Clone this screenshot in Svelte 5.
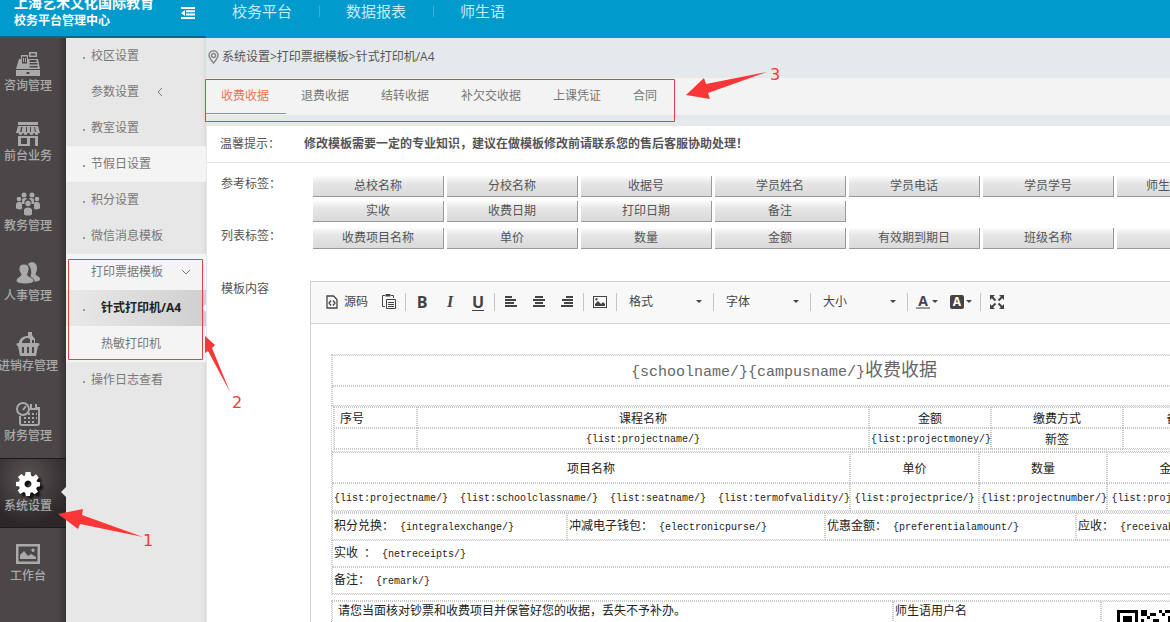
<script>
  const topNav = ['校务平台', '数据报表', '师生语'];

  const modules = [
    { name: '咨询管理', icon: 'register' },
    { name: '前台业务', icon: 'shop' },
    { name: '教务管理', icon: 'group' },
    { name: '人事管理', icon: 'people' },
    { name: '进销存管理', icon: 'basket' },
    { name: '财务管理', icon: 'finance' },
    { name: '系统设置', icon: 'gear' },
    { name: '工作台', icon: 'picture' }
  ];
  let activeModule = '系统设置';

  const menu = [
    { name: '校区设置', dot: true },
    { name: '参数设置', arrow: 'left' },
    { name: '教室设置', dot: true },
    { name: '节假日设置', dot: true, light: true },
    { name: '积分设置', dot: true },
    { name: '微信消息模板', dot: true },
    { name: '打印票据模板', arrow: 'down', light: true },
    { name: '针式打印机/A4', dot: true, sub: true, current: true },
    { name: '热敏打印机', sub: true, light: true },
    { name: '操作日志查看', dot: true }
  ];

  const tabs = ['收费收据', '退费收据', '结转收据', '补欠交收据', '上课凭证', '合同'];
  let activeTab = '收费收据';

  const refTags = [
    '总校名称', '分校名称', '收据号', '学员姓名', '学员电话', '学员学号', '师生语用户名',
    '实收', '收费日期', '打印日期', '备注'
  ];
  const listTags = ['收费项目名称', '单价', '数量', '金额', '有效期到期日', '班级名称', '备注'];

  const combos = ['格式', '字体', '大小'];
</script>

<div class="app">
  <header>
    <div class="brand">
      <div class="brand-text">
        <strong class="school">上海艺术文化国际教育</strong>
        <strong class="center">校务平台管理中心</strong>
      </div>
      <button class="toggle" aria-label="收起菜单">
        <svg width="14" height="12" viewBox="0 0 14 12" fill="#fff">
          <path d="M0 0h14v2H0zM5 3.3h9v2H5zM5 6.6h9v2H5zM0 10h14v2H0zM4 3v6L0 6z" />
        </svg>
      </button>
    </div>
    <nav>
      {#each topNav as item}
        <a href="#top">{item}</a>
      {/each}
    </nav>
  </header>

  <div class="body">
    <nav class="rail">
      {#each modules as item}
        <a href="#module" class:active={item.name === activeModule}>
          <svg width="24" height="24" viewBox="0 0 24 24" fill="currentColor">
            {#if item.icon === 'register'}
              <path fill-rule="evenodd" d="M13 0h8v5h-8zM14.500 1.500v2h5v-2zM5 3h7v4h10l2 10H0L3 7h2zM6 4.500v7h5v-7zM13.500 8v2h7V8zM13.500 11v1.500h8V11zM13.500 14v1.500h8V14zM7 6h1v4H7zM9 6h1v4H9zM0 18h24v6H0zM10.500 20v2h3v-2z" />
            {:else if item.icon === 'shop'}
              <path fill-rule="evenodd" d="M2 0h20v3H2zM2 4h20l2 7h-1.500a2 2 0 0 1-4 0h-1a2 2 0 0 1-4 0h-2a2 2 0 0 1-4 0h-1a2 2 0 0 1-4 0H0zM5 5l-1 5h1.500L6.500 5zM10 5v5h1V5zM14 5v5h1V5zM18 5l1 5h1l-1-5zM2 14h20v10h-3v-8h-5v8H2zM5 16v6h6v-6z" />
            {:else if item.icon === 'group'}
              <circle cx="8" cy="3" r="2.500" /><circle cx="16" cy="3" r="2.500" />
              <circle cx="3" cy="7" r="2.300" /><circle cx="21" cy="7" r="2.300" />
              <circle cx="12" cy="11.500" r="2.700" />
              <path d="M6 12V8c0-2.500 5-2.500 5-1-2 1-3 2-2.500 5zM18 12V8c0-2.500-5-2.500-5-1 2 1 3 2 2.500 5zM0 17v-4c0-4 6-4 6-1v5c-2 1-6 0-6-1zM24 17v-4c0-4-6-4-6-1v5c2 1 6 0 6-1zM8 22v-4c0-3.500 8-3.500 8 0v4c0 2-8 2-8 0z" />
            {:else if item.icon === 'people'}
              <path d="M12 2c3-3 9-2 9 4 0 3-1 4-1.500 6 .5 2 4.500 2 4.500 5 0 2-2 2.500-6 2.500-1-2-2-3-4-4 1.500-3 2.500-8-2-13.500z" />
              <path d="M8 2c4 0 5.500 3 5 6-.3 2-1.300 3-1.500 5 1 2 6.500 2.500 6.500 6 0 4-18 4-18 0 0-3.500 4-4 5-6 0-2-1.800-3-2-5-.4-3 1-6 5-6z" stroke="#4b4748" />
            {:else if item.icon === 'basket'}
              <path fill-rule="evenodd" d="M12 0h4v3l3 4v4h3c2 0 2 3 0 3l-2 10H4L2 14c-2 0-2-3 0-3h1c0-4 4-7 8-7h1zM6 11h8V7L12 6C9 6 6 8 6 11zM16 8v3h2V8zM6 15v6h2v-6zM11 15v6h2v-6zM16 15v6h2v-6z" />
            {:else if item.icon === 'finance'}
              <g fill="none" stroke="currentColor" stroke-width="2">
                <circle cx="7" cy="7" r="6" /><path d="M7 8l3-4M4 14v7q0 2 2 2h15q2 0 2-2V6h-3M15 2v5M20 2v5M14 7h8" />
              </g>
              <path d="M12 11h2v2h-2zM16 11h2v2h-2zM20 11h1v2h-1zM8 15h2v2H8zM12 15h2v2h-2zM16 15h2v2h-2zM8 19h2v2H8zM12 19h2v2h-2zM16 19h2v2h-2zM20 15h1v2h-1z" />
            {:else if item.icon === 'gear'}
              <path fill-rule="evenodd" d="M9.500 0h5l.6 3.500 2 .9L20 2.300l2.800 3.500-2.200 2.700.8 1.500 2.600.2v4l-3 .7-.8 1.800 1.800 3-3.300 2.500-2.600-2-1.600.6-.6 3.200h-4l-.7-3.200-1.800-.7-3 1.900-2.700-3.200 2-2.700-.6-1.700L0 14v-4l3-.6.8-1.700L2 5l3.300-3 2.600 2 1.300-.5zM12 8.500a3.500 3.500 0 1 0 .01 0z" />
            {:else}
              <path fill-rule="evenodd" d="M0 2h24v20H0zM2.500 4.500v15h19v-15zM4 17v-4l4-4 4 5 3-2 5 3v2zM17 6.500a1.700 1.700 0 1 0 .01 0z" />
            {/if}
          </svg>
          <span>{item.name}</span>
        </a>
      {/each}
    </nav>

    <nav class="menu">
      {#each menu as item}
        <a href="#menu" class:light={item.light} class:sub={item.sub} class:current={item.current}>
          <i class:dot={item.dot}></i>
          <span>{item.name}</span>
          {#if item.arrow}
            <svg class={item.arrow} width="10" height="10" viewBox="0 0 10 10" fill="none" stroke="#777">
              <path d={item.arrow === 'left' ? 'M7 1L3 5l4 4' : 'M1 3l4 4 4-4'} />
            </svg>
          {/if}
        </a>
      {/each}
    </nav>

    <main>
      <div class="crumb">
        <svg width="11" height="14" viewBox="0 0 11 14" fill="none" stroke="#888" stroke-width="1.500">
          <path d="M5.500 13C3 10 1 8 1 5.300a4.500 4.500 0 0 1 9 0C10 8 8 10 5.500 13z" />
          <circle cx="5.500" cy="5.500" r="2" />
        </svg>
        系统设置&gt;打印票据模板&gt;针式打印机/A4
      </div>

      <div class="tabs">
        {#each tabs as tab}
          <button class:active={tab === activeTab} on:click={() => (activeTab = tab)}>{tab}</button>
        {/each}
      </div>

      <section class="panel">
        <div class="tip">
          <span>温馨提示：</span>
          <strong>修改模板需要一定的专业知识，建议在做模板修改前请联系您的售后客服协助处理！</strong>
        </div>

        <div class="form">
          <div class="row">
            <span class="label">参考标签：</span>
            <div class="tags">
              {#each refTags as tag}<button>{tag}</button>{/each}
            </div>
          </div>
          <div class="row">
            <span class="label">列表标签：</span>
            <div class="tags">
              {#each listTags as tag}<button>{tag}</button>{/each}
            </div>
          </div>

          <div class="row content">
            <span class="label">模板内容</span>
            <div class="editor">
              <div class="toolbar">
                <button class="source">
                  <svg width="12" height="14" viewBox="0 0 12 14" fill="none" stroke="#444" stroke-width="1.300">
                    <path d="M1 1h6.500L11 4.500V13H1zM5 5.500L3 8l2 2.500M7 5.500L9 8l-2 2.500" />
                  </svg>
                  源码
                </button>
                <button aria-label="粘贴">
                  <svg width="14" height="15" viewBox="0 0 14 15" fill="none" stroke="#444">
                    <path d="M3 1.500H.5v11H3M9 1.500h2.500V4M4.500 5.500h9v9h-9zM6 8.500h6M6 10.500h6M6 12.500h6" />
                    <path d="M3.500 0h5v2.500h-5z" fill="#444" stroke="none" />
                  </svg>
                </button>
                <i class="sep"></i>
                <button class="bold">B</button>
                <button class="italic">I</button>
                <button class="underline">U</button>
                <i class="sep"></i>
                <button aria-label="左对齐">
                  <svg width="12" height="12" fill="#444"><path d="M0 0h7v2H0zM0 3h11v2H0zM0 6h9v2H0zM0 9h12v2H0z" /></svg>
                </button>
                <button aria-label="居中">
                  <svg width="12" height="12" fill="#444"><path d="M2 0h8v2H2zM0 3h12v2H0zM2 6h8v2H2zM0 9h12v2H0z" /></svg>
                </button>
                <button aria-label="右对齐">
                  <svg width="12" height="12" fill="#444"><path d="M5 0h7v2H5zM1 3h11v2H1zM3 6h9v2H3zM0 9h12v2H0z" /></svg>
                </button>
                <i class="sep"></i>
                <button aria-label="图像">
                  <svg width="14" height="12" fill="#444" fill-rule="evenodd">
                    <path d="M0 0h14v12H0zM1 1v10h12V1zM2 10V8l3-3 3 3 2-2 2 2v2zM3.500 2a1.200 1.200 0 1 0 .01 0z" />
                  </svg>
                </button>
                <i class="sep"></i>
                {#each combos as combo}
                  <span class="combo">
                    <select aria-label={combo}><option>{combo}</option></select>
                    <i class="caret"></i>
                  </span>
                  <i class="sep"></i>
                {/each}
                <button class="color" aria-label="文本颜色"><b class="fg">A</b><i class="caret"></i></button>
                <button class="color" aria-label="背景颜色"><b class="bg">A</b><i class="caret"></i></button>
                <i class="sep"></i>
                <button aria-label="最大化">
                  <svg width="14" height="14" viewBox="0 0 14 14" fill="#444" stroke="#444" stroke-width="2">
                    <path stroke="none" d="M0 0h5L0 5zM14 0v5L9 0zM0 14V9l5 5zM14 14H9l5-5z" />
                    <path d="M1.500 1.500l4 4M12.500 1.500l-4 4M1.500 12.500l4-4M12.500 12.500l-4-4" />
                  </svg>
                </button>
              </div>

              <div class="paper">
                <table class="heading">
                  <tbody>
                    <tr class="title">
                      <td><code>{'{schoolname/}{campusname/}'}</code>收费收据</td>
                    </tr>
                    <tr class="blank"><td></td></tr>
                  </tbody>
                </table>

                <div class="nested">
                  <table class="courses">
                    <colgroup><col class="w83" /><col class="w452" /><col class="w122" /><col class="w132" /><col /></colgroup>
                    <tbody>
                      <tr><td class="start">序号</td><td>课程名称</td><td>金额</td><td>缴费方式</td><td>备注</td></tr>
                      <tr>
                        <td></td>
                        <td><code>{'{list:projectname/}'}</code></td>
                        <td><code>{'{list:projectmoney/}'}</code></td>
                        <td>新签</td>
                        <td></td>
                      </tr>
                    </tbody>
                  </table>
                </div>

                <table class="projects">
                  <colgroup><col class="w518" /><col class="w129" /><col class="w128" /><col /></colgroup>
                  <tbody>
                    <tr class="tall"><td>项目名称</td><td>单价</td><td>数量</td><td>金额</td></tr>
                    <tr>
                      <td class="start">
                        <code>{'{list:projectname/}\u00a0\u00a0{list:schoolclassname/}\u00a0\u00a0{list:seatname/}\u00a0\u00a0{list:termofvalidity/}'}</code>
                      </td>
                      <td><code>{'{list:projectprice/}'}</code></td>
                      <td><code>{'{list:projectnumber/}'}</code></td>
                      <td><code>{'{list:projectmoney/}'}</code></td>
                    </tr>
                  </tbody>
                </table>

                <table class="totals">
                  <colgroup><col class="w235" /><col class="w258" /><col class="w251" /><col /></colgroup>
                  <tbody>
                    <tr>
                      <td>积分兑换：<code>{'\u00a0{integralexchange/}'}</code></td>
                      <td>冲减电子钱包：<code>{'\u00a0{electronicpurse/}'}</code></td>
                      <td>优惠金额：<code>{'\u00a0{preferentialamount/}'}</code></td>
                      <td>应收：<code>{'\u00a0{receivable/}'}</code></td>
                    </tr>
                    <tr><td colspan="4">实收<code>{'\u00a0'}</code>：<code>{'\u00a0{netreceipts/}'}</code></td></tr>
                    <tr><td colspan="4">备注：<code>{'\u00a0{remark/}'}</code></td></tr>
                  </tbody>
                </table>

                <table class="footer">
                  <colgroup><col class="w561" /><col class="w208" /><col /></colgroup>
                  <tbody>
                    <tr>
                      <td class="notice">请您当面核对钞票和收费项目并保管好您的收据，丢失不予补办。</td>
                      <td>师生语用户名</td>
                      <td class="qr">
                        <svg width="99" height="99" viewBox="0 0 33 33" fill="#000" shape-rendering="crispEdges">
                          <path fill-rule="evenodd" d="M0 0h7v7H0zM1 1v5h5V1zM2 2h3v3H2zM8 0h2v2H8zM11 1h2v1h-2zM10 2h1v1h-1zM14 0h1v1h-1zM16 0h2v1h-2zM15 1h1v1h-1zM17 2h1v2h-1zM8 3h1v1H8zM12 3h2v1h-2zM9 4h2v1H9zM14 4h2v1h-2zM0 9h3v1H0zM5 9h2v2H5z" />
                        </svg>
                      </td>
                    </tr>
                  </tbody>
                </table>
              </div>
            </div>
          </div>
        </div>
      </section>
    </main>
  </div>

  <!-- walkthrough marks drawn over the page -->
  <svg class="marks" width="1170" height="622" viewBox="0 0 1170 622">
    <g fill="none" stroke="#d9444c">
      <path d="M68.500 259.500h134v100h-134z" />
      <path d="M205.500 79.500h469v42h-469z" />
    </g>
    <g fill="#fb3636">
      <path d="M58 514L83 509L82 515L143 537L80 524L78 529z" />
      <path d="M205 336L215 345L212 348L230 392L208 351L205 353z" />
      <path d="M686 95L704 78L706 84L767 72L708 93L710 99z" />
      <text x="143" y="546">1</text>
      <text x="232" y="408">2</text>
      <text x="770" y="80">3</text>
    </g>
  </svg>
</div>

<style>
  :global(body) {
    margin: 0;
    overflow: hidden;
  }
  .app {
    position: relative;
    display: flex;
    flex-direction: column;
    height: 100vh;
    overflow: hidden;
    font-family: 'Open Sans', 'Noto Sans CJK SC', sans-serif;
    font-size: 12px;
    line-height: 16px;
    color: #555;
  }
  a {
    color: inherit;
    text-decoration: none;
  }
  button {
    padding: 0;
    border: 0;
    background: none;
    font: inherit;
    color: inherit;
  }

  header {
    display: flex;
    flex: none;
    height: 38px;
    background: #009acd;
    color: #fff;
  }
  .brand {
    display: flex;
    justify-content: space-between;
    box-sizing: border-box;
    width: 206px;
    padding: 0 11px 0 14px;
    border-bottom: 2px solid #006a93;
  }
  .brand-text {
    display: flex;
    flex-direction: column;
    justify-content: flex-end;
    padding-bottom: 7px;
  }
  .school {
    font-size: 14px;
    line-height: 20px;
  }
  .toggle {
    height: 30px;
    line-height: 30px;
  }
  header nav {
    display: flex;
    align-items: center;
    height: 21px;
    font-size: 15px;
    color: #c5eaf8;
  }
  header nav a {
    padding: 0 27px 0 26px;
    line-height: 12px;
  }
  header nav a + a {
    border-left: 1px solid #35b0d9;
  }

  .body {
    display: flex;
    flex: 1;
    min-height: 0;
  }
  .rail {
    flex: none;
    width: 66px;
    background: linear-gradient(to right, #4b4748 58px, #383435);
    color: #aaa;
  }
  .rail a {
    position: relative;
    display: flex;
    flex-direction: column;
    align-items: center;
    box-sizing: border-box;
    height: 70px;
    padding: 14px 10px 0 0;
    white-space: nowrap;
    font-weight: 500;
  }
  .rail svg {
    flex: none;
    margin-bottom: 2px;
  }
  .rail .active {
    background: radial-gradient(circle at 28px 20px, #5a5455, #2c2728 46px);
    box-shadow: inset 0 1px #1d191a, inset 0 -1px #1d191a;
  }
  .active svg {
    color: #fff;
    filter: drop-shadow(3px 3px 1px #111);
  }
  .rail .active::after {
    content: '';
    position: absolute;
    top: 29px;
    right: 0;
    border: 5px solid transparent;
    border-left: 0;
    border-right-color: #e8e8e8;
  }

  .menu {
    flex: none;
    width: 140px;
    background: linear-gradient(to right, #e8e7e7 136px, #d9dada);
    color: #777;
  }
  .menu a {
    position: relative;
    display: flex;
    align-items: center;
    height: 36px;
    padding-left: 17px;
  }
  .menu i {
    width: 8px;
    height: 2px;
  }
  .dot::before {
    content: '';
    display: block;
    width: 2px;
    height: 2px;
    margin-top: 2px;
    background: #999;
  }
  .menu .light {
    background: #f4f4f4;
  }
  .menu .sub span {
    padding-left: 10px;
  }
  .menu .current {
    background: linear-gradient(to right, #e9e9e9, #cfcfcf);
    color: #222;
    font-weight: bold;
  }
  .current::after {
    content: '';
    position: absolute;
    right: 0;
    border: 4px solid transparent;
    border-left: 0;
    border-right-color: #fff;
  }
  .menu .left {
    margin-left: 16px;
  }
  .menu .down {
    margin-left: 18px;
  }

  main {
    flex: 1;
    min-width: 0;
    overflow: hidden;
    background: #e5e9ec;
  }
  .crumb {
    display: flex;
    align-items: center;
    gap: 3px;
    height: 38px;
    padding: 0 0 2px 2px;
  }
  .tabs {
    display: flex;
    height: 37px;
    background: #f3f3f3;
    color: #777;
  }
  .tabs button {
    box-sizing: border-box;
    height: 36px;
    padding: 0 17px 0 15px;
    border-bottom: 1px solid transparent;
  }
  .tabs .active {
    border-bottom: 1px solid #f2705c;
    color: #f2705c;
  }

  .panel {
    min-width: 1060px;
    min-height: 500px;
    margin: 11px 0 0 1px;
    background: #fff;
  }
  .tip {
    display: flex;
    gap: 24px;
    padding: 10px 13px;
    border-bottom: 1px solid #e4e4e4;
  }
  .form {
    padding: 13px 0 0 14px;
  }
  .row {
    display: flex;
    margin-bottom: 6px;
  }
  .label {
    flex: none;
    width: 89px;
  }
  .tags {
    display: grid;
    grid-template-columns: repeat(7, 131px);
    gap: 4px 3px;
    padding-left: 3px;
  }
  .tags button {
    height: 21px;
    border-right: 1px solid #999;
    border-bottom: 1px solid #999;
    background: linear-gradient(#fcfcfc, #e6e6e6 35%, #dadada);
    line-height: 18px;
  }

  .content {
    margin-top: 32px;
  }
  .editor {
    flex: 1;
    border: 1px solid #d1d1d1;
  }
  .toolbar {
    display: flex;
    align-items: center;
    height: 39px;
    padding: 0 0 2px 8px;
    border-bottom: 1px solid #d1d1d1;
    background: #f8f8f8;
    color: #444;
  }
  .toolbar button {
    display: flex;
    align-items: center;
    justify-content: center;
    width: 28px;
    height: 28px;
  }
  .toolbar .source {
    gap: 6px;
    width: 56px;
  }
  .toolbar .bold,
  .toolbar .italic,
  .toolbar .underline {
    font-size: 16px;
    font-weight: bold;
  }
  .toolbar .italic {
    font-family: 'Liberation Serif', serif;
    font-style: italic;
  }
  .toolbar .underline {
    text-decoration: underline;
    text-underline-offset: 2px;
  }
  .sep {
    width: 1px;
    height: 18px;
    margin: 0 2px;
    background: #c4c4c4;
  }
  .combo {
    display: flex;
    align-items: center;
    width: 92px;
  }
  .combo select {
    flex: 1;
    min-width: 0;
    height: 28px;
    padding: 0 0 0 10px;
    border: 0;
    background: none;
    appearance: none;
    font: inherit;
    color: inherit;
  }
  .caret {
    border: 3px solid transparent;
    border-top-color: #444;
    border-bottom: 0;
  }
  .combo .caret {
    margin-right: 9px;
  }
  .toolbar .color {
    gap: 2px;
    width: 34px;
  }
  .color b {
    width: 14px;
    font-size: 14px;
    line-height: 12px;
  }
  .fg {
    border-bottom: 2px solid #999;
  }
  .color .bg {
    border-radius: 2px;
    background: #444;
    color: #fff;
    font-size: 12px;
    line-height: 14px;
  }

  .paper {
    width: 906px;
    padding: 30px 20px 0;
    font-family: 'Noto Sans CJK SC', sans-serif;
    color: #222;
  }
  table {
    width: 100%;
    border: 1px dotted #c8c8c8;
    border-spacing: 0;
    table-layout: fixed;
  }
  td {
    box-sizing: border-box;
    height: 27px;
    padding: 0 1px;
    border: 1px dotted #c8c8c8;
    text-align: center;
    white-space: nowrap;
  }
  /* half the width of a Chinese character for each letter */
  code {
    font-family: 'Liberation Mono', monospace;
    font-size: 10px;
  }
  .heading {
    border-bottom: 0;
  }
  .title td {
    height: 31px;
    font-size: 18px;
    line-height: 24px;
    color: #666;
  }
  .title code {
    font-size: 15px;
  }
  .blank td {
    height: 20px;
  }
  .nested {
    padding: 0 1px 1px;
    border: 1px dotted #c8c8c8;
    border-width: 0 1px;
  }
  .courses td {
    height: 21px;
  }
  .courses .start {
    padding-left: 5px;
  }
  .start,
  .totals td,
  .footer td {
    text-align: left;
  }
  .projects .tall td {
    height: 31px;
  }
  .projects td {
    height: 28px;
  }
  .footer {
    margin-top: 5px;
  }
  .footer td {
    vertical-align: top;
  }
  .footer .notice {
    padding-left: 5px;
  }
  .footer .qr {
    padding: 8px 15px;
  }
  .w83 { width: 83px; }
  .w122 { width: 122px; }
  .w128 { width: 128px; }
  .w129 { width: 129px; }
  .w132 { width: 132px; }
  .w208 { width: 208px; }
  .w235 { width: 235px; }
  .w251 { width: 251px; }
  .w258 { width: 258px; }
  .w452 { width: 452px; }
  .w518 { width: 518px; }
  .w561 { width: 561px; }

  .marks {
    position: absolute;
    top: 0;
    left: 0;
    pointer-events: none;
    font-family: 'DejaVu Sans', sans-serif;
    font-size: 16px;
  }
</style>
